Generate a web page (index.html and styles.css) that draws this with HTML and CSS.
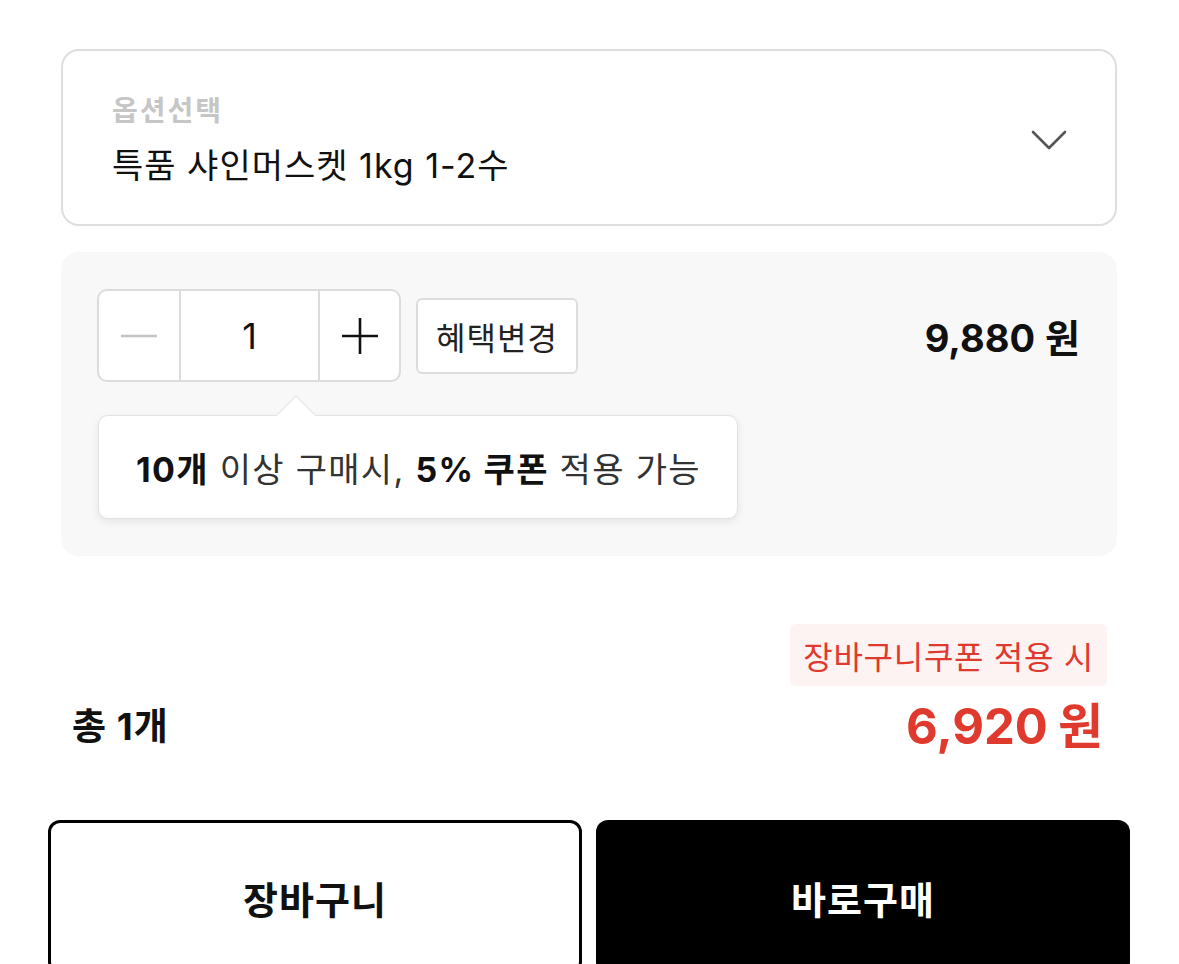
FILE: index.html
```html
<!DOCTYPE html>
<html lang="ko">
<head>
<meta charset="utf-8">
<link rel="stylesheet" href="styles.css">
</head>
<body>
<div class="page">
  <div class="select">
    <div class="select-text">
      <div class="select-label">옵션선택</div>
      <div class="select-value">특품 샤인머스켓 1kg 1-2수</div>
    </div>
    <svg class="chevron" width="36" height="20" viewBox="0 0 36 20"><path d="M2 2 L18 18 L34 2" fill="none" stroke="#555" stroke-width="2.6" stroke-linecap="round" stroke-linejoin="round"/></svg>
  </div>

  <div class="panel">
    <div class="panel-row">
      <div class="stepper">
        <div class="step-btn minus"><svg width="36" height="4" viewBox="0 0 36 4"><path d="M0 2 H36" stroke="#c4c4c4" stroke-width="2.4"/></svg></div>
        <div class="step-value">1</div>
        <div class="step-btn plus"><svg width="36" height="36" viewBox="0 0 36 36"><path d="M0 18 H36 M18 0 V36" stroke="#111" stroke-width="2.6"/></svg></div>
      </div>
      <div class="benefit-btn">혜택변경</div>
      <div class="price">9,880<span class="won">원</span></div>
    </div>
    <div class="tooltip">
      <span class="tip-arrow"></span>
      <p class="tip-text"><b>10개</b> 이상 구매시, <b>5% 쿠폰</b> 적용 가능</p>
    </div>
  </div>

  <div class="summary">
    <div class="total">총 1개</div>
    <div class="summary-right">
      <div class="coupon-pill">장바구니쿠폰 적용 시</div>
      <div class="final-price">6,920<span class="won">원</span></div>
    </div>
  </div>

  <div class="actions">
    <div class="btn btn-cart">장바구니</div>
    <div class="btn btn-buy">바로구매</div>
  </div>
</div>
</body>
</html>
```

FILE: styles.css
```css
* { box-sizing: border-box; }
html, body { margin: 0; padding: 0; background: #fff; }
body {
  font-family: "Inter", "Noto Sans CJK KR", sans-serif;
  color: #111;
  overflow: hidden;
}
.page {
  width: 1179px;
  padding-top: 49px;
}
.select {
  margin: 0 62px 0 61px;
  height: 177px;
  border: 2px solid #dedede;
  border-radius: 18px;
  display: flex;
  align-items: center;
  justify-content: space-between;
  padding: 0 48px 0 49px;
}
.select-text {
  display: flex;
  flex-direction: column;
  gap: 14px;
  padding-top: 6px;
}
.select-label {
  font-size: 28px;
  line-height: 36px;
  font-weight: 700;
  color: #c6c6c6;
  letter-spacing: 2px;
}
.select-value {
  font-size: 34px;
  line-height: 46px;
  color: #111;
  letter-spacing: 1px;
}
.chevron { margin-top: 4px; }

.panel {
  margin: 26px 62px 0 61px;
  background: #f8f8f8;
  border-radius: 18px;
  padding: 37px 37px 37px 36px;
}
.panel-row {
  display: flex;
  align-items: center;
}
.stepper {
  display: flex;
  height: 93px;
  border: 2px solid #dcdcdc;
  border-radius: 10px;
  background: #fff;
  overflow: hidden;
}
.step-btn {
  display: flex;
  align-items: center;
  justify-content: center;
}
.minus { width: 80px; }
.plus { width: 79px; }
.step-value {
  width: 141px;
  border-left: 2px solid #dcdcdc;
  border-right: 2px solid #dcdcdc;
  display: flex;
  align-items: center;
  justify-content: center;
  font-size: 36px;
  font-weight: 400;
}
.benefit-btn {
  margin-left: 15px;
  width: 162px;
  height: 76px;
  border: 2px solid #dcdcdc;
  border-radius: 6px;
  background: #fff;
  display: flex;
  align-items: center;
  justify-content: center;
  font-size: 32px;
  letter-spacing: 1px;
  color: #222;
}
.price {
  margin-left: auto;
  font-size: 38px;
  font-weight: 700;
  color: #111;
}
.won { margin-left: 10px; }

.tooltip {
  position: relative;
  margin-top: 33px;
  margin-left: 1px;
  width: 640px;
  height: 104px;
  background: #fff;
  border: 1.5px solid #e2e2e2;
  border-radius: 10px;
  box-shadow: 0 3px 8px rgba(0,0,0,0.08);
  display: flex;
  align-items: center;
  padding-left: 37px;
}
.tip-arrow {
  position: absolute;
  top: -15px;
  left: 183px;
  width: 28px;
  height: 28px;
  background: #fff;
  border-top: 1.5px solid #e2e2e2;
  border-left: 1.5px solid #e2e2e2;
  transform: rotate(45deg);
}
.tip-text {
  margin: 0;
  font-size: 34px;
  color: #333;
  letter-spacing: 1.3px;
}
.tip-text b { color: #111; font-weight: 700; }

.summary {
  margin: 68px 72px 0 72px;
  display: flex;
  justify-content: space-between;
  align-items: flex-end;
}
.total {
  font-size: 37px;
  font-weight: 700;
  line-height: 60px;
  letter-spacing: 1px;
}
.summary-right {
  display: flex;
  flex-direction: column;
  align-items: flex-end;
}
.coupon-pill {
  height: 62px;
  padding: 0 13px;
  background: #fdf3f3;
  border-radius: 6px;
  color: #e0392e;
  font-size: 32px;
  letter-spacing: 0.7px;
  display: flex;
  align-items: center;
}
.final-price {
  margin-top: 11px;
  font-size: 49px;
  line-height: 60px;
  font-weight: 700;
  color: #e0392e;
  padding-right: 4px;
}

.actions {
  margin: 63px 0 0 48px;
  display: flex;
  gap: 14px;
}
.btn {
  flex: 0 0 534px;
  height: 154px;
  border-radius: 12px;
  display: flex;
  align-items: center;
  justify-content: center;
  font-size: 38px;
  letter-spacing: 1px;
  font-weight: 700;
}
.btn-cart {
  border: 3px solid #000;
  background: #fff;
  color: #111;
}
.btn-buy {
  background: #000;
  color: #fff;
}
```
